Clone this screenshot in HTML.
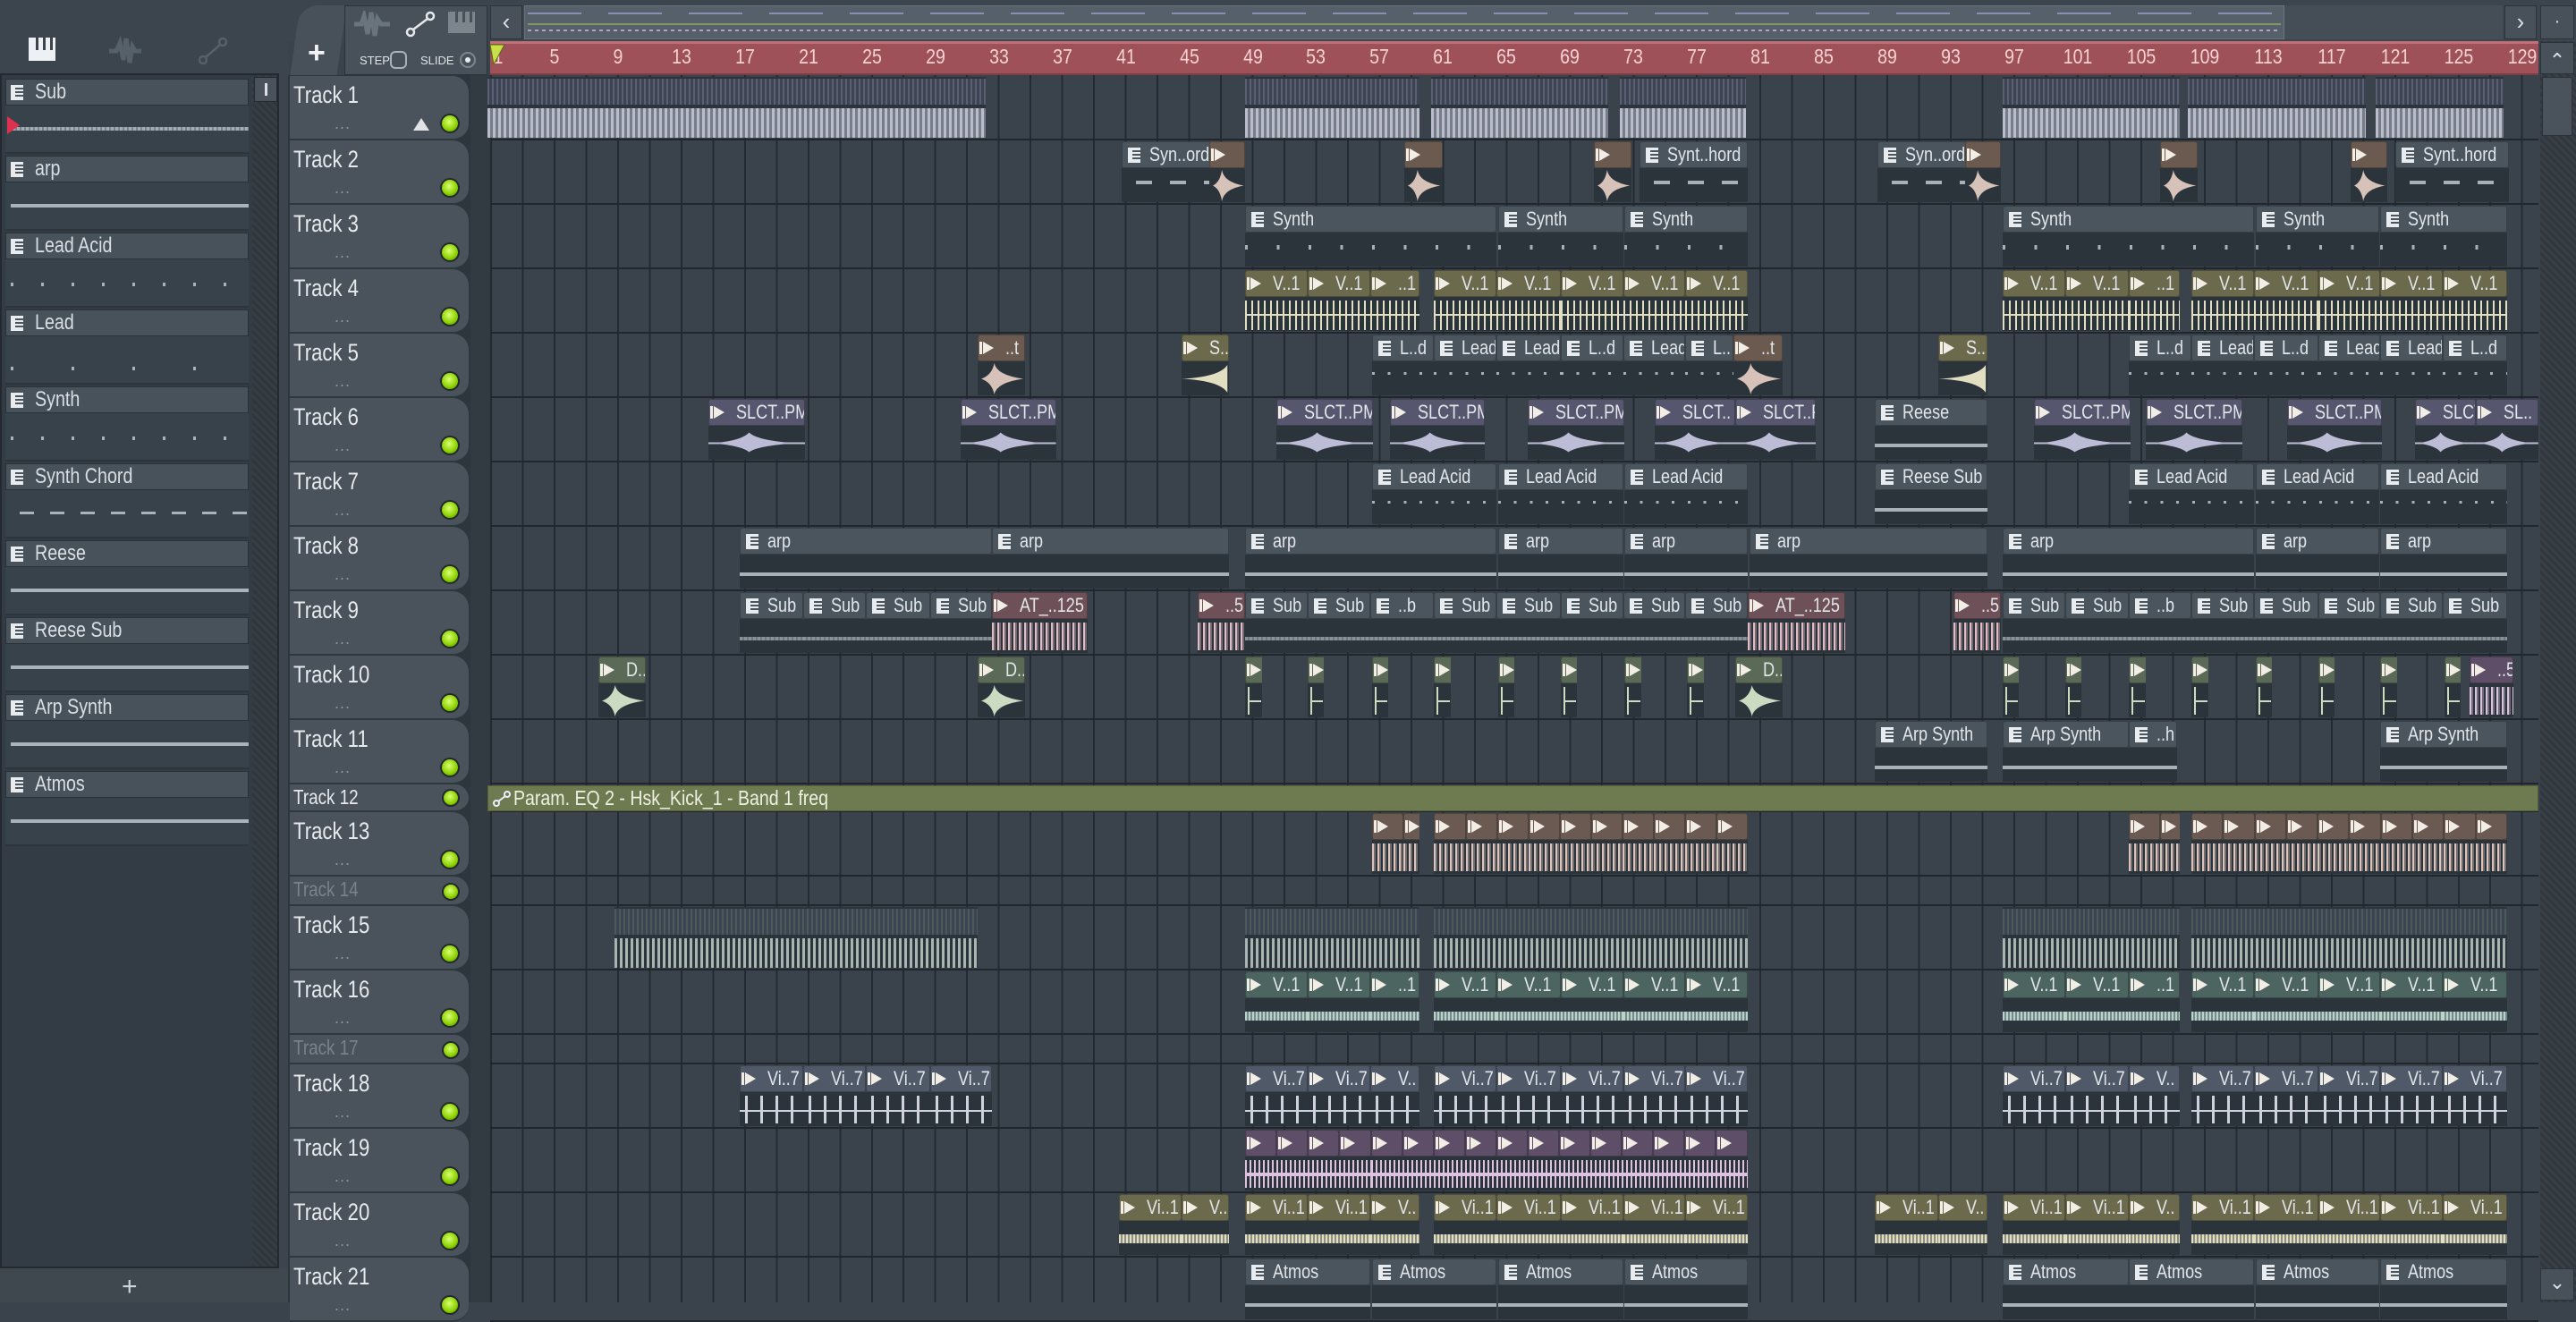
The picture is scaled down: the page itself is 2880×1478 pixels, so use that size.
<!DOCTYPE html>
<html><head><meta charset="utf-8">
<style>
*{box-sizing:border-box;margin:0;padding:0}
body{width:2880px;height:1456px;overflow:hidden;background:#3a434b;font-family:"Liberation Sans Narrow","Liberation Sans",sans-serif;color:#d9dee2;position:relative}
.a{position:absolute}
.clip{position:absolute;overflow:hidden}
.hd{position:absolute;left:0;right:0;top:0;height:30px;border-radius:3px;border:1px solid rgba(0,0,0,.25);font-size:22px;line-height:28px;white-space:nowrap;overflow:hidden;padding-left:30px;color:#e2e6ea}
.hd span,.li .h span,.th .n span{display:inline-block;transform:scaleX(.82);transform-origin:left center}
.bd{position:absolute;left:0;right:0;top:30px;bottom:1px;background:#2c343b}
.ic{position:absolute;left:6px;top:6px;width:14px;height:17px;background:#e8ecef}
.ic:after{content:"";position:absolute;left:5px;top:3px;width:9px;height:2px;background:#4b555e;box-shadow:0 4px 0 #4b555e,0 8px 0 #4b555e}
.au{position:absolute;left:5px;top:7px;width:0;height:0;border-left:12px solid #f2eee6;border-top:7px solid transparent;border-bottom:7px solid transparent}
.au:after{content:"";position:absolute;left:-16px;top:-7px;width:3px;height:14px;background:#f2eee6}
.wv{position:absolute;left:0;right:0}
.th{position:absolute;left:324px;width:200px;background:#4a535b;border-radius:0 18px 18px 0;border-bottom:2px solid #2f373e}
.th .n{position:absolute;left:4px;top:6px;font-size:27px;color:#e6eaed;white-space:nowrap}
.th .led{position:absolute;right:10px;bottom:6px;width:22px;height:22px;border-radius:50%;background:radial-gradient(circle at 45% 40%,#d8ff70,#8ad000 60%,#4a7a00);border:2px solid #23292e}
.th .dots{position:absolute;left:50px;bottom:6px;font-size:18px;color:#8a939b;letter-spacing:1px}
.li{position:absolute;left:6px;width:272px}
.li .h{height:30px;background:#48525b;border:1px solid #2a3137;font-size:24px;line-height:28px;padding-left:32px;position:relative;white-space:nowrap}
.li .b{height:54px;background:#38424a;position:relative;border-bottom:2px solid #2d353b}
.rn{position:absolute;top:50px;font-size:23px;color:#f6d2d2;transform:translateX(-50%) scaleX(.85)}
</style></head><body>
<div class="a" style="left:0;top:0;width:322px;height:1456px;background:#3c454d"></div>
<div class="a" style="left:0;top:82px;width:312px;height:1336px;background:#333c44;border:2px solid #23292e"></div>
<div class="a" style="left:282px;top:84px;width:28px;height:1332px;background:repeating-linear-gradient(45deg,#2f363c 0 3px,#363e45 3px 6px)"></div>
<div class="a" style="left:284px;top:86px;width:26px;height:28px;background:#4a535b;border:1px solid #23292e"><div class="a" style="left:11px;top:6px;width:3px;height:14px;background:#dde"></div></div>
<div class="a" style="left:0;top:1418px;width:322px;height:38px;background:#40484f"></div>
<div class="a" style="left:136px;top:1422px;font-size:30px;color:#cfd4d8">+</div>
<svg class="a" style="left:30px;top:40px" width="40" height="32"><rect x="2" y="2" width="30" height="26" fill="#eef1f3"/><rect x="10" y="2" width="3" height="14" fill="#3c454d"/><rect x="18" y="2" width="3" height="14" fill="#3c454d"/><rect x="26" y="2" width="3" height="14" fill="#3c454d"/></svg>
<svg class="a" style="left:120px;top:40px" width="40" height="34"><path d="M2 17 L10 17 L14 8 L18 27 L21 3 L25 30 L28 12 L31 17 L38 17" stroke="#566069" stroke-width="5" fill="none"/></svg>
<svg class="a" style="left:218px;top:40px" width="40" height="34"><circle cx="9" cy="27" r="4" stroke="#566069" stroke-width="2.5" fill="none"/><circle cx="31" cy="7" r="4" stroke="#566069" stroke-width="2.5" fill="none"/><line x1="12" y1="24" x2="28" y2="10" stroke="#566069" stroke-width="2.5"/></svg>
<div id="lp"></div>
<div class="a" style="left:322px;top:0;width:2558px;height:47px;background:#3c454d"></div>
<div class="a" style="left:330px;top:6px;width:52px;height:78px;background:#48515a;border-radius:20px 0 0 0;transform:skewX(-8deg)"></div>
<div class="a" style="left:344px;top:40px;font-size:34px;color:#f0f2f4;font-weight:bold">+</div>
<div class="a" style="left:385px;top:6px;width:160px;height:78px;background:#48515a;border:1px solid #2c3338"></div>
<svg class="a" style="left:394px;top:12px" width="44" height="30"><path d="M2 15 L10 15 L13 6 L17 26 L21 2 L25 28 L28 9 L32 15 L42 15" stroke="#6a747c" stroke-width="5" fill="none"/></svg>
<svg class="a" style="left:450px;top:10px" width="40" height="34"><circle cx="9" cy="26" r="4" stroke="#e6e9ec" stroke-width="2.5" fill="none"/><circle cx="31" cy="8" r="4" stroke="#e6e9ec" stroke-width="2.5" fill="none"/><line x1="12" y1="23" x2="28" y2="11" stroke="#e6e9ec" stroke-width="2.5"/></svg>
<svg class="a" style="left:500px;top:12px" width="34" height="26"><rect x="1" y="1" width="30" height="24" fill="#7c858c"/><rect x="9" y="1" width="3" height="12" fill="#48515a"/><rect x="17" y="1" width="3" height="12" fill="#48515a"/><rect x="25" y="1" width="3" height="12" fill="#48515a"/></svg>
<div class="a" style="left:402px;top:60px;font-size:13px;color:#e0e4e7">STEP</div>
<div class="a" style="left:436px;top:57px;width:19px;height:20px;border:2px solid #aab2b8;border-radius:6px"></div>
<div class="a" style="left:470px;top:60px;font-size:13px;color:#e0e4e7">SLIDE</div>
<div class="a" style="left:514px;top:58px;width:18px;height:18px;border:2px solid #7d868d;border-radius:50%"><div class="a" style="left:4px;top:4px;width:6px;height:6px;border-radius:50%;background:#e8ecef"></div></div>
<div class="a" style="left:548px;top:6px;width:36px;height:38px;background:#48515a;border:1px solid #2c3338;font-size:26px;text-align:center;line-height:34px;color:#dde">&lsaquo;</div>
<div class="a" style="left:586px;top:6px;width:2212px;height:38px;background:#454e56"></div>
<div class="a" style="left:586px;top:6px;width:1968px;height:38px;background:#56606a;border:1px solid #6a747d"></div>
<div class="a" style="left:590px;top:14px;width:1960px;height:2px;background:repeating-linear-gradient(90deg,#8a8fb0 0 60px,transparent 60px 90px)"></div>
<div class="a" style="left:590px;top:26px;width:1960px;height:2px;background:#a8b860;opacity:.6"></div>
<div class="a" style="left:590px;top:33px;width:1960px;height:2px;background:repeating-linear-gradient(90deg,#b8a0c0 0 4px,transparent 4px 8px)"></div>
<div class="a" style="left:2800px;top:6px;width:36px;height:38px;background:#48515a;border:1px solid #2c3338;font-size:26px;text-align:center;line-height:34px;color:#dde">&rsaquo;</div>
<div class="a" style="left:2840px;top:6px;width:38px;height:38px;background:#48515a;border:1px solid #2c3338;font-size:20px;text-align:center;line-height:34px;color:#dde">·</div>
<div class="a" style="left:548px;top:46px;width:2290px;height:38px;background:#9e5159;border-top:3px solid #c07078;border-bottom:2px solid #7a3e45"></div>
<div id="rul"></div>
<svg class="a" style="left:546px;top:48px" width="20" height="26"><path d="M2 2 L18 2 L6 24 Z" fill="#c8e048" stroke="#5a6a10"/></svg>
<div class="a" style="left:2840px;top:46px;width:40px;height:1410px;background:repeating-linear-gradient(45deg,#30383e 0 3px,#383f46 3px 6px)"></div>
<div class="a" style="left:2840px;top:47px;width:38px;height:36px;background:#48515a;border:1px solid #2c3338;text-align:center;font-size:22px;line-height:40px;color:#dde">&#8963;</div>
<div class="a" style="left:2842px;top:86px;width:34px;height:66px;background:#4a535b;border:1px solid #2c3338"></div>
<div class="a" style="left:2840px;top:1418px;width:38px;height:36px;background:#48515a;border:1px solid #2c3338;text-align:center;font-size:22px;line-height:30px;color:#dde">&#8964;</div>
<div class="a" style="left:322px;top:84px;width:226px;height:1372px;background:#2e363d"></div>
<div class="a" style="left:526px;top:84px;width:22px;height:1372px;background:#323b42"></div>
<div class="a" style="left:548px;top:84px;width:2290px;height:1372px;background-color:#3a434b;background-image:repeating-linear-gradient(90deg,#232a30 0 2px,transparent 2px 35.48px);background-position:0 0"></div>
<div id="rows"></div>
<div id="clips"></div>
<script>
const S=1.8367;
const hs=[72,72,72,72,72,72,72,72,72,72,72,31,72,33,72,72,33,72,72,72,72];
const rows=[];let yy=85;hs.forEach(v=>{rows.push([yy,v]);yy+=v;});
let h='';
for(let b=1;b<=129;b+=4){const x=549+(b-1)*17.74;h+=`<div class="rn" style="left:${x+(b==1?8:0)}px">${b}</div>`;}
document.getElementById('rul').innerHTML=h;
h='';
rows.forEach((r,i)=>{
 h+=`<div class="a" style="left:548px;top:${r[0]+r[1]-2}px;width:2290px;height:2px;background:#20272c"></div>`;
 const dim=(i==13||i==16);
 h+=`<div class="th" style="top:${r[0]}px;height:${r[1]}px"><div class="n" style="${r[1]<40?'top:1px;font-size:23px;':''}${dim?'color:#78828a':''}"><span>Track ${i+1}</span></div>${r[1]>40?'<div class="dots">...</div>':''}<div class="led" style="${r[1]<40?'bottom:4px;width:20px;height:20px':''}"></div></div>`;
});
h+=`<div class="a" style="left:462px;top:132px;width:0;height:0;border-left:9px solid transparent;border-right:9px solid transparent;border-bottom:14px solid #dfe3e6"></div>`;
document.getElementById('rows').innerHTML=h;
const items=['Sub','arp','Lead Acid','Lead','Synth','Synth Chord','Reese','Reese Sub','Arp Synth','Atmos'];
const prev=['sub','line','dots','dots2','dots3','dash','line','line','line','line'];
h='';
items.forEach((t,i)=>{const y=88+i*86;let p='';
 if(prev[i]=='sub')p='<div class="a" style="left:8px;top:24px;width:264px;height:4px;background:repeating-linear-gradient(90deg,#a4acb2 0 3px,#7c848a 3px 5px)"></div><div class="a" style="left:2px;top:12px;width:0;height:0;border-left:14px solid #e03050;border-top:10px solid transparent;border-bottom:10px solid transparent"></div>';
 else if(prev[i]=='line')p='<div class="a" style="left:6px;top:24px;width:266px;height:4px;background:#aab3b9"></div>';
 else if(prev[i]=='dash')p='<div class="a" style="left:16px;top:24px;width:256px;height:3px;background:repeating-linear-gradient(90deg,#aab3b9 0 16px,transparent 16px 34px)"></div>';
 else {const st=prev[i]=='dots2'?68:34;p=`<div class="a" style="left:6px;top:${prev[i]=='dots2'?34:26}px;width:266px;height:4px;background:repeating-linear-gradient(90deg,#aab3b9 0 3px,transparent 3px ${st}px)"></div>`;}
 h+=`<div class="li" style="top:${y}px"><div class="h"><div class="ic" style="left:5px"></div><span>${t}</span></div><div class="b">${p}</div></div>`;});
document.getElementById('lp').innerHTML=h;
const C={p:['#4b555e',null],br:['#6b5a50','#d6c2b8'],ol:['#6b6a4c','#e2dec2'],pu:['#56566e','#bcbcd6'],pk:['#6e5058','#e2bcc4'],gr:['#5a6a56','#cadbc2'],te:['#4d6560','#b8d2cc'],gb:['#4f5968','#cdd2dc'],vi:['#5e4e68','#dcc2de'],pk2:['#6a5a52','#dcc4bc']};
h='';
function clip(ri,x1,x2,t,l,pv){
 const r=rows[ri];const L=x1*S,W=(x2-x1)*S,T=r[0]+1,H=r[1]-3;
 const c=C[t];let inner='';
 if(t=='nohd'||t=='nohd2'){
  const col=t=='nohd'?'#b9bdcb':'#a8b4b0';
  inner=`<div class="bd" style="top:0;background:#2c343b"></div><div class="wv" style="top:2px;height:${H*0.42}px;background:repeating-linear-gradient(90deg,${t=='nohd'?'#5a6072':'#4a5a58'} 0 2px,#3c4352 2px 5px)"></div><div class="wv" style="top:${H*0.5}px;height:${H*0.48}px;background:repeating-linear-gradient(90deg,${col} 0 3px,${t=='nohd'?col+'88':'transparent'} 3px 6px)"></div>`;
  h+=`<div class="clip" style="left:${L}px;top:${T}px;width:${W}px;height:${H}px">${inner}</div>`;return;}
 inner=`<div class="bd"></div><div class="hd" style="background:${c[0]}">${t=='p'?'<div class="ic"></div>':'<div class="au"></div>'}<span>${l||''}</span></div>`;
 const bh=H-30,mid=30+bh/2;
 if(t=='p'){
  let s='';
  if(pv=='line')s=`top:${mid}px;height:4px;background:#a8b1b8`;
  else if(pv=='sub')s=`top:${mid}px;height:4px;background:repeating-linear-gradient(90deg,#8a9298 0 3px,#6f777d 3px 5px)`;
  else if(pv=='dash')s=`top:${mid-6}px;height:4px;background:repeating-linear-gradient(90deg,transparent 0 16px,#a8b1b8 16px 34px,transparent 34px 38px)`;
  else if(pv=='dots2')s=`top:${mid-6}px;height:5px;background:repeating-linear-gradient(90deg,#a8b1b8 0 3px,transparent 3px 35.5px)`;
  else if(pv=='dots3')s=`top:${mid-8}px;height:3px;background:repeating-linear-gradient(90deg,#a8b1b8 0 3px,transparent 3px 17.7px)`;
  if(s)inner+=`<div class="wv" style="${s}"></div>`;
 } else {
  const w=c[1];
  if(pv=='star')inner+=`<svg class="a" style="left:0;top:30px" width="${W}" height="${bh}"><path d="M4 ${bh/2} Q${W*0.3} ${bh/2-4} ${W*0.35} 2 Q${W*0.4} ${bh/2-4} ${W-2} ${bh/2} Q${W*0.4} ${bh/2+4} ${W*0.35} ${bh-2} Q${W*0.3} ${bh/2+4} 4 ${bh/2}Z" fill="${w}"/></svg>`;
  else if(pv=='swell')inner+=`<svg class="a" style="left:0;top:30px" width="${W}" height="${bh}"><path d="M0 ${bh/2} Q${W*0.8} ${bh/2-2} ${W-2} 4 L${W-2} ${bh-4} Q${W*0.8} ${bh/2+2} 0 ${bh/2}Z" fill="${w}"/></svg>`;
  else if(pv=='blob')inner+=`<svg class="a" style="left:0;top:30px" width="${W}" height="${bh}"><line x1="0" y1="${bh/2}" x2="${W}" y2="${bh/2}" stroke="${w}" stroke-width="2"/><path d="M${W*0.05} ${bh/2} Q${W*0.35} ${bh/2-3} ${W*0.42} ${bh/2-12} Q${W*0.5} ${bh/2-3} ${W*0.9} ${bh/2} Q${W*0.5} ${bh/2+3} ${W*0.42} ${bh/2+10} Q${W*0.35} ${bh/2+3} ${W*0.05} ${bh/2}Z" fill="${w}"/></svg>`;
  else if(pv=='thin')inner+=`<div class="wv" style="top:${mid-5}px;height:10px;background:repeating-linear-gradient(90deg,${w} 0 2px,${w}88 2px 4px)"></div>`;
  else if(pv=='sparse')inner+=`<div class="wv" style="top:${mid}px;height:2px;background:${w}"></div><div class="wv" style="top:${34}px;height:${bh-8}px;background:repeating-linear-gradient(90deg,transparent 0 6px,${w} 6px 9px,transparent 9px 17px)"></div>`;
  else if(pv=='dense')inner+=`<div class="wv" style="top:${34}px;height:${bh-8}px;background:repeating-linear-gradient(90deg,${w} 0 2px,transparent 2px 5px)"></div><div class="wv" style="top:${mid-2}px;height:4px;background:${w}"></div>`;
  else if(pv=='full')inner+=`<div class="wv" style="top:${34}px;height:${bh-8}px;background:repeating-linear-gradient(90deg,${w} 0 2px,${w}66 2px 4px,transparent 4px 6px)"></div>`;
  else if(pv=='tall')inner+=`<div class="wv" style="top:${34}px;height:${bh-6}px;background:repeating-linear-gradient(90deg,${w} 0 2px,transparent 2px 7px)"></div><div class="wv" style="top:${mid-1}px;height:2px;background:${w}"></div>`;
  else if(pv=='tick')inner+=`<div class="a" style="left:3px;top:${34}px;width:2px;height:${bh-8}px;background:${w}"></div><div class="a" style="left:3px;top:${mid-1}px;width:${W-4}px;height:2px;background:${w}"></div>`;
 }
 h+=`<div class="clip" style="left:${L}px;top:${T}px;width:${W}px;height:${H}px">${inner}</div>`;
}
function L(ri,arr,t,lab,pv){arr.forEach(a=>clip(ri,a[0],a[1],t,a[2]!==undefined?a[2]:lab,pv));}
L(0,[[297,600],[758,864],[871,979],[986,1063],[1219,1327],[1332,1440],[1446,1524]],'nohd');
L(1,[[683,758,'Syn..ord'],[998,1064,'Synt..hord'],[1143,1218,'Syn..ord'],[1458,1527,'Synt..hord']],'p','','dash');
L(1,[[736,758],[855,878],[970,993],[1196,1218],[1315,1338],[1431,1453]],'br','','star');
L(2,[[758,911],[912,988],[989,1064],[1219,1372],[1373,1448],[1449,1526]],'p','Synth','dots2');
L(3,[[758,796,'V..1'],[796,834,'V..1'],[834,864,'..1'],[873,911,'V..1'],[911,950,'V..1'],[950,988,'V..1'],[988,1026,'V..1'],[1026,1064,'V..1'],[1219,1257,'V..1'],[1257,1296,'V..1'],[1296,1327,'..1'],[1334,1372,'V..1'],[1372,1411,'V..1'],[1411,1449,'V..1'],[1449,1487,'V..1'],[1487,1526,'V..1']],'ol','','tall');
L(4,[[595,624,'..t'],[1055,1085,'..t']],'br','','star');
L(4,[[719,748,'S..'],[1180,1210,'S..']],'ol','','swell');
L(4,[[835,873,'L..d'],[873,911,'Lead'],[911,950,'Lead'],[950,988,'L..d'],[988,1026,'Lead'],[1026,1055,'L..'],[1296,1334,'L..d'],[1334,1372,'Lead'],[1372,1411,'L..d'],[1411,1449,'Lead'],[1449,1487,'Lead'],[1487,1526,'L..d']],'p','','dots3');
L(5,[[431,490],[585,643],[777,836],[846,904],[930,989],[1007,1056,'SLCT..'],[1056,1105],[1238,1297],[1306,1365],[1392,1450],[1470,1507,'SLCT..'],[1507,1545,'SL..']],'pu','SLCT..PM','blob');
L(5,[[1141,1210,'Reese']],'p','','line');
L(6,[[835,911],[912,988],[989,1064],[1296,1372],[1373,1448],[1449,1526]],'p','Lead Acid','dots3');
L(6,[[1141,1210]],'p','Reese Sub','line');
L(7,[[450,604],[604,748],[758,911],[912,988],[989,1064],[1065,1210],[1219,1372],[1373,1448],[1449,1526]],'p','arp','line');
L(8,[[450,489],[489,527],[527,566],[566,604],[758,796],[796,834],[834,873,'..b'],[873,911],[911,950],[950,988],[988,1026],[1026,1064],[1219,1257],[1257,1296],[1296,1334,'..b'],[1334,1372],[1372,1411],[1411,1449],[1449,1487],[1487,1526]],'p','Sub','sub');
L(8,[[604,662,'AT_..125'],[729,758,'..5'],[1064,1123,'AT_..125'],[1189,1218,'..5']],'pk','','full');
L(9,[[364,393,'D..'],[595,624,'D..'],[1056,1085,'D..']],'gr','','star');
[758,796,835,873,912,950,989,1027,1219,1257,1296,1334,1373,1411,1449,1488].forEach(x=>clip(9,x,x+10,'gr','','tick'));
L(9,[[1503,1530,'..5']],'vi','','full');
L(10,[[1141,1210,'Arp Synth'],[1219,1296,'Arp Synth'],[1296,1325,'..h'],[1449,1526,'Arp Synth']],'p','','line');
h+=`<div class="clip" style="left:${297*S}px;top:${rows[11][0]+1}px;width:${1248*S}px;height:29px;background:#6e7a50;border:1px solid #55603a;font-size:23px;line-height:27px;padding-left:28px;color:#eef0e4;white-space:nowrap"><span style="display:inline-block;transform:scaleX(.85);transform-origin:left">Param. EQ 2 - Hsk_Kick_1 - Band 1 freq</span><svg class="a" style="left:4px;top:4px" width="22" height="20"><circle cx="5" cy="15" r="3" stroke="#eef" stroke-width="2" fill="none"/><circle cx="17" cy="5" r="3" stroke="#eef" stroke-width="2" fill="none"/><line x1="7" y1="13" x2="15" y2="7" stroke="#eef" stroke-width="2"/></svg></div>`;
clip(12,835,854,'pk2','','full');clip(12,854,864,'pk2','','full');
for(let i=0;i<10;i++)clip(12,873+i*19.1,873+(i+1)*19.1,'pk2','','full');
clip(12,1296,1315,'pk2','','full');clip(12,1315,1327,'pk2','','full');
for(let i=0;i<10;i++)clip(12,1334+i*19.2,1334+(i+1)*19.2,'pk2','','full');
L(14,[[374,595],[758,864],[873,1064],[1219,1327],[1334,1526]],'nohd2');
L(15,[[758,796,'V..1'],[796,834,'V..1'],[834,864,'..1'],[873,911,'V..1'],[911,950,'V..1'],[950,988,'V..1'],[988,1026,'V..1'],[1026,1064,'V..1'],[1219,1257,'V..1'],[1257,1296,'V..1'],[1296,1327,'..1'],[1334,1372,'V..1'],[1372,1411,'V..1'],[1411,1449,'V..1'],[1449,1487,'V..1'],[1487,1526,'V..1']],'te','','thin');
L(17,[[450,489],[489,527],[527,566],[566,604],[758,796],[796,834],[834,864,'V..'],[873,911],[911,950],[950,988],[988,1026],[1026,1064],[1219,1257],[1257,1296],[1296,1327,'V..'],[1334,1372],[1372,1411],[1411,1449],[1449,1487],[1487,1526]],'gb','Vi..7','sparse');
for(let i=0;i<16;i++)clip(18,758+i*19.1,758+(i+1)*19.1,'vi','','dense');
L(19,[[681,719,'Vi..1'],[719,748,'V..'],[758,796],[796,834],[834,864,'V..'],[873,911],[911,950],[950,988],[988,1026],[1026,1064],[1141,1180],[1180,1210,'V..'],[1219,1257],[1257,1296],[1296,1327,'V..'],[1334,1372],[1372,1411],[1411,1449],[1449,1487],[1487,1526]],'ol','Vi..1','thin');
L(20,[[758,834],[835,911],[912,988],[989,1064],[1219,1296],[1296,1372],[1373,1448],[1449,1526]],'p','Atmos','line');
document.getElementById('clips').innerHTML=h;
</script>
</body></html>
